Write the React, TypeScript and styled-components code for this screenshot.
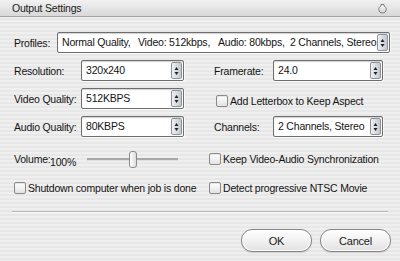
import React from "react";
import styled, { createGlobalStyle } from "styled-components";

const Global = createGlobalStyle`
  html, body { margin: 0; padding: 0; }
  body {
    width: 400px; height: 261px; overflow: hidden;
    font-family: "Liberation Sans", Arial, sans-serif;
  }
`;

const Window = styled.div`
  width: 400px;
  height: 261px;
  box-sizing: border-box;
  display: flex;
  flex-direction: column;
  background: repeating-linear-gradient(
    to bottom,
    #efefef 0px, #efefef 2px,
    #e7e7e7 2px, #e7e7e7 4px
  );
  font-size: 10.5px;
  letter-spacing: -0.2px;
  color: #141414;
`;

const TitleBar = styled.div`
  height: 16px;
  flex: none;
  display: flex;
  align-items: center;
  justify-content: space-between;
  padding: 0 13px 0 12px;
  background: linear-gradient(#f2f2f2, #d8d8d8);
  border-bottom: 1px solid #a2a2a2;
  font-size: 10.5px;
  color: #1a1a1a;
`;

const Body = styled.div`
  display: flex;
  flex-direction: column;
  padding: 15px 0 0 14px;
`;

const Row = styled.div`
  display: flex;
  align-items: center;
  height: 21px;
`;

const Label = styled.span<{ $w: number }>`
  width: ${(p) => p.$w}px;
  flex: none;
  white-space: nowrap;
`;

const Field = styled.div<{ $w: number }>`
  width: ${(p) => p.$w}px;
  height: 21px;
  box-sizing: border-box;
  flex: none;
  display: flex;
  background: #fff;
  border: 1px solid #6e6e6e;
  border-radius: 2px;
  box-shadow: inset 0 1px 1px rgba(0, 0, 0, 0.18), 1px 1px 0 rgba(255, 255, 255, 0.7);
  overflow: hidden;
`;

const FieldText = styled.div`
  flex: 1;
  min-width: 0;
  padding-left: 4px;
  line-height: 19px;
  white-space: nowrap;
  overflow: hidden;
`;

const Seg = styled.span<{ $w?: number }>`
  display: inline-block;
  width: ${(p) => (p.$w ? `${p.$w}px` : "auto")};
`;

const Spinner = styled.div`
  width: 11px;
  flex: none;
  margin: 1px 1px 1px 0;
  box-sizing: border-box;
  border: 1px solid #8d929a;
  border-radius: 2px;
  background: linear-gradient(to right, #eef0f4, #c3c8d0);
  display: flex;
  align-items: center;
  justify-content: center;
`;

const MainGrid = styled.div`
  display: grid;
  grid-template-columns: 200px 1fr;
  grid-auto-rows: 21px;
  row-gap: 7px;
  margin-top: 7px;
`;

const Cell = styled.div<{ $pad?: number; $down?: number }>`
  display: flex;
  align-items: center;
  padding-left: ${(p) => p.$pad ?? 0}px;
  padding-top: ${(p) => p.$down ?? 0}px;
`;

const OptionGrid = styled.div`
  display: grid;
  grid-template-columns: 195px 1fr;
  grid-auto-rows: 20px;
  row-gap: 9px;
  margin-top: 12px;
`;

const CheckLabel = styled.label`
  display: flex;
  align-items: center;
  gap: 2px;
  white-space: nowrap;
`;

const Box = styled.span`
  width: 12px;
  height: 12px;
  box-sizing: border-box;
  flex: none;
  border: 1px solid #8a8a8a;
  border-radius: 2px;
  background: linear-gradient(#ffffff, #e2e2e2);
  box-shadow: inset 0 1px 1px rgba(0, 0, 0, 0.1);
`;

const VolumeValue = styled.span`
  width: 37px;
  flex: none;
  padding-top: 5px;
`;

const Track = styled.div`
  position: relative;
  width: 91px;
  height: 17px;
  flex: none;
  display: flex;
  align-items: center;
  &::before {
    content: "";
    flex: 1;
    height: 2px;
    background: #a9a9a9;
    border-bottom: 1px solid #e0e0e0;
  }
`;

const Thumb = styled.span`
  position: absolute;
  top: 0;
  width: 8px;
  height: 17px;
  box-sizing: border-box;
  border: 1px solid #8a8a8a;
  border-radius: 3px;
  background: linear-gradient(to right, #ffffff, #dcdcdc);
  transform: translateX(-50%);
`;

const Separator = styled.div`
  width: 376px;
  margin: 13px 0 0 -2px;
  border-top: 1px solid #b6b6b6;
  border-bottom: 1px solid #fafafa;
`;

const ButtonRow = styled.div`
  display: flex;
  justify-content: flex-end;
  gap: 8px;
  margin-top: 16px;
  padding-right: 9px;
`;

const Button = styled.button`
  width: 71px;
  height: 23px;
  box-sizing: border-box;
  border: 1px solid #858585;
  border-radius: 11px;
  background: linear-gradient(#ffffff, #f1f1f1 50%, #e2e2e2);
  box-shadow: inset 0 0 0 1px rgba(255, 255, 255, 0.9), 0 1px 1px rgba(0, 0, 0, 0.12);
  font-family: "Liberation Sans", Arial, sans-serif;
  font-size: 11px;
  letter-spacing: -0.2px;
  color: #1a1a1a;
  padding: 0;
`;

const SpinIcon = () => (
  <svg width="5" height="12" viewBox="0 0 5 12">
    <path d="M2.5 2 L4.5 5 L0.5 5 Z" fill="#222" />
    <path d="M2.5 10 L4.5 7 L0.5 7 Z" fill="#222" />
  </svg>
);

const CloseIcon = () => (
  <svg width="9" height="11" viewBox="0 0 9 11">
    <defs>
      <linearGradient id="cl" x1="0" y1="0" x2="0" y2="1">
        <stop offset="0" stopColor="#ffffff" />
        <stop offset="1" stopColor="#d0d0d0" />
      </linearGradient>
    </defs>
    <path d="M3 1.5 H6 V3 C7.6 3.6 8.2 4.9 8.2 6.5 C8.2 8.6 6.6 10 4.5 10 C2.4 10 0.8 8.6 0.8 6.5 C0.8 4.9 1.4 3.6 3 3 Z" fill="url(#cl)" stroke="#7c7c7c" strokeWidth="1" />
  </svg>
);

type ComboProps = { w: number; children: React.ReactNode };
const Combo = ({ w, children }: ComboProps) => (
  <Field $w={w}>
    <FieldText>{children}</FieldText>
    <Spinner>
      <SpinIcon />
    </Spinner>
  </Field>
);

const Check = ({ text }: { text: string }) => (
  <CheckLabel>
    <Box />
    <span>{text}</span>
  </CheckLabel>
);

const profileParts = [
  { t: "Normal Quality,", w: 76 },
  { t: "Video: 512kbps,", w: 80 },
  { t: "Audio: 80kbps,", w: 72 },
  { t: "2 Channels, Stereo" },
];

export default function App() {
  const volume = 0.5;
  return (
    <>
      <Global />
      <Window>
        <TitleBar>
          <span>Output Settings</span>
          <CloseIcon />
        </TitleBar>
        <Body>
          <Row>
            <Label $w={43}>Profiles:</Label>
            <Combo w={333}>
              {profileParts.map((p) => (
                <Seg key={p.t} $w={p.w}>
                  {p.t}
                </Seg>
              ))}
            </Combo>
          </Row>

          <MainGrid>
            <Cell>
              <Label $w={67}>Resolution:</Label>
              <Combo w={103}>320x240</Combo>
            </Cell>
            <Cell>
              <Label $w={59}>Framerate:</Label>
              <Combo w={110}>24.0</Combo>
            </Cell>
            <Cell>
              <Label $w={67}>Video Quality:</Label>
              <Combo w={103}>512KBPS</Combo>
            </Cell>
            <Cell $pad={2} $down={4}>
              <Check text="Add Letterbox to Keep Aspect" />
            </Cell>
            <Cell>
              <Label $w={67}>Audio Quality:</Label>
              <Combo w={103}>80KBPS</Combo>
            </Cell>
            <Cell>
              <Label $w={59}>Channels:</Label>
              <Combo w={110}>2 Channels, Stereo</Combo>
            </Cell>
          </MainGrid>

          <OptionGrid>
            <Cell>
              <Label $w={36}>Volume:</Label>
              <VolumeValue>100%</VolumeValue>
              <Track>
                <Thumb style={{ left: `${volume * 100}%` }} />
              </Track>
            </Cell>
            <Cell>
              <Check text="Keep Video-Audio Synchronization" />
            </Cell>
            <Cell>
              <Check text="Shutdown computer when job is done" />
            </Cell>
            <Cell>
              <Check text="Detect progressive NTSC Movie" />
            </Cell>
          </OptionGrid>

          <Separator />

          <ButtonRow>
            <Button>OK</Button>
            <Button>Cancel</Button>
          </ButtonRow>
        </Body>
      </Window>
    </>
  );
}
